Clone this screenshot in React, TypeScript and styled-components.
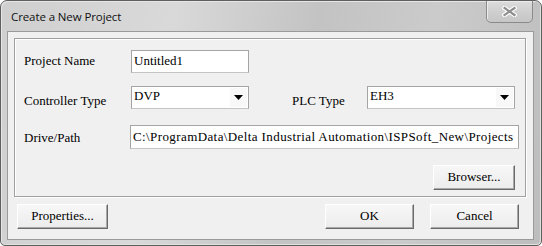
import React from "react";
import styled, { createGlobalStyle, css } from "styled-components";

const GlobalStyle = createGlobalStyle`
  html, body {
    margin: 0;
    padding: 0;
    background: #ffffff;
  }
`;

const serif = css`
  font-family: "Liberation Serif", "Times New Roman", serif;
  font-size: 13px;
  color: #000;
`;

const Window = styled.div`
  box-sizing: border-box;
  width: 542px;
  height: 246px;
  border: 1px solid #5f5f5f;
  border-radius: 7px 7px 5px 5px;
  background: linear-gradient(
    100deg,
    #cfcfcf 0%,
    #d9d9d9 30%,
    #c3c3c3 55%,
    #cbcbcb 75%,
    #bdbdbd 100%
  );
  box-shadow: inset 1px 1px 0 #e6e6e6, inset -1px -1px 0 #e0e0e0;
  display: flex;
  flex-direction: column;
  padding-bottom: 5px;
  overflow: hidden;
`;

const TitleBar = styled.div`
  height: 30px;
  display: flex;
  align-items: flex-start;
  justify-content: space-between;
  flex: none;
`;

const Title = styled.span`
  font-family: "Open Sans", "Noto Sans", sans-serif;
  font-size: 11.5px;
  color: #111;
  padding: 8px 0 0 10px;
  letter-spacing: -0.1px;
`;

const CloseButton = styled.div`
  box-sizing: border-box;
  width: 47px;
  height: 23px;
  margin: -1px 8px 0 0;
  border: 1px solid #8b8b8b;
  border-radius: 0 0 5px 5px;
  background: linear-gradient(#dcdcdc, #cfcfcf 50%, #c6c6c6);
  box-shadow: inset 1px 1px 0 #ececec;
  display: flex;
  align-items: center;
  justify-content: center;
`;

const Client = styled.div`
  flex: 1;
  margin: 0 7px 0 6px;
  border: 1px solid #9a9a9a;
  background: #f0f0f0;
  display: flex;
  flex-direction: column;
`;

const GroupBox = styled.div`
  box-sizing: border-box;
  margin: 6px 7px 0 6px;
  height: 159px;
  border: 1px solid #a0a0a0;
  box-shadow: inset 1px 1px 0 #ffffff, 1px 1px 0 #ffffff;
  padding: 11px 0 0 9px;
  display: flex;
  flex-direction: column;
`;

const Row = styled.div<{ $gap?: number; $height: number }>`
  display: flex;
  align-items: center;
  height: ${({ $height }) => $height}px;
  margin-top: ${({ $gap }) => $gap ?? 0}px;
`;

const Label = styled.span<{ $width: number; $indent?: number; $dy?: number }>`
  ${serif};
  width: ${({ $width }) => $width}px;
  margin-left: ${({ $indent }) => $indent ?? 0}px;
  position: relative;
  top: ${({ $dy }) => $dy ?? 0}px;
  white-space: nowrap;
`;

const TextBox = styled.div<{ $width: number; $height: number; $spacing?: number }>`
  ${serif};
  box-sizing: border-box;
  width: ${({ $width }) => $width}px;
  height: ${({ $height }) => $height}px;
  border: 1px solid #a5a5a5;
  border-bottom-color: #c4c4c4;
  background: #ffffff;
  padding: 0 0 1px 2px;
  letter-spacing: ${({ $spacing }) => $spacing ?? 0}px;
  display: flex;
  align-items: center;
  white-space: nowrap;
  overflow: hidden;
`;

const Select = styled(TextBox)`
  justify-content: space-between;
  padding-right: 0;
  padding-bottom: 3px;
`;

const ArrowArea = styled.div`
  width: 17px;
  height: 19px;
  display: flex;
  align-items: center;
  justify-content: center;
  margin-right: 1px;
  margin-top: 3px;
  background: #f8f8f8;
`;

const ButtonRow = styled.div<{ $gap: number }>`
  display: flex;
  justify-content: flex-end;
  margin-top: ${({ $gap }) => $gap}px;
  padding-right: 10px;
`;

const Button = styled.div<{ $width: number }>`
  ${serif};
  box-sizing: border-box;
  width: ${({ $width }) => $width}px;
  height: 25px;
  border: 1px solid;
  border-color: #ffffff #6a6a6a #6a6a6a #ffffff;
  box-shadow: inset -1px -1px 0 #a8a8a8;
  background: linear-gradient(#f7f7f7, #ececec);
  display: flex;
  align-items: center;
  justify-content: center;
  padding-bottom: 1px;
`;

const Footer = styled.div`
  display: flex;
  align-items: center;
  margin-top: 7px;
  padding: 0 14px 0 9px;
  gap: 16px;
`;

const Spacer = styled.div`
  flex: 1;
`;

const DropArrow = () => (
  <svg width="9" height="5" viewBox="0 0 9 5">
    <path d="M0 0 H9 L4.5 5 Z" fill="#000" />
  </svg>
);

const CloseGlyph = () => (
  <svg width="15" height="11" viewBox="0 0 15 11">
    <path
      d="M2.5 2 L12.5 9 M12.5 2 L2.5 9"
      stroke="#ffffff"
      strokeWidth="4.4"
      strokeLinecap="square"
    />
    <path
      d="M2.5 2 L12.5 9 M12.5 2 L2.5 9"
      stroke="#8e8e8e"
      strokeWidth="2.2"
      strokeLinecap="square"
    />
  </svg>
);

export default function App() {
  return (
    <>
      <GlobalStyle />
      <Window>
        <TitleBar>
          <Title>Create a New Project</Title>
          <CloseButton>
            <CloseGlyph />
          </CloseButton>
        </TitleBar>
        <Client>
          <GroupBox>
            <Row $height={23}>
              <Label $width={107} $dy={-1}>Project Name</Label>
              <TextBox $width={118} $height={23}>Untitled1</TextBox>
            </Row>
            <Row $gap={13} $height={23}>
              <Label $width={107} $dy={3}>Controller Type</Label>
              <Select $width={118} $height={23}>
                DVP
                <ArrowArea>
                  <DropArrow />
                </ArrowArea>
              </Select>
              <Label $width={75} $indent={43} $dy={3}>PLC Type</Label>
              <Select $width={148} $height={23}>
                EH3
                <ArrowArea>
                  <DropArrow />
                </ArrowArea>
              </Select>
            </Row>
            <Row $gap={16} $height={24}>
              <Label $width={106} $dy={1}>Drive/Path</Label>
              <TextBox $width={389} $height={24} $spacing={0.4}>
                C:\ProgramData\Delta Industrial Automation\ISPSoft_New\Projects
              </TextBox>
            </Row>
            <ButtonRow $gap={16}>
              <Button $width={82}>Browser...</Button>
            </ButtonRow>
          </GroupBox>
          <Footer>
            <Button $width={91}>Properties...</Button>
            <Spacer />
            <Button $width={89}>OK</Button>
            <Button $width={89}>Cancel</Button>
          </Footer>
        </Client>
      </Window>
    </>
  );
}
